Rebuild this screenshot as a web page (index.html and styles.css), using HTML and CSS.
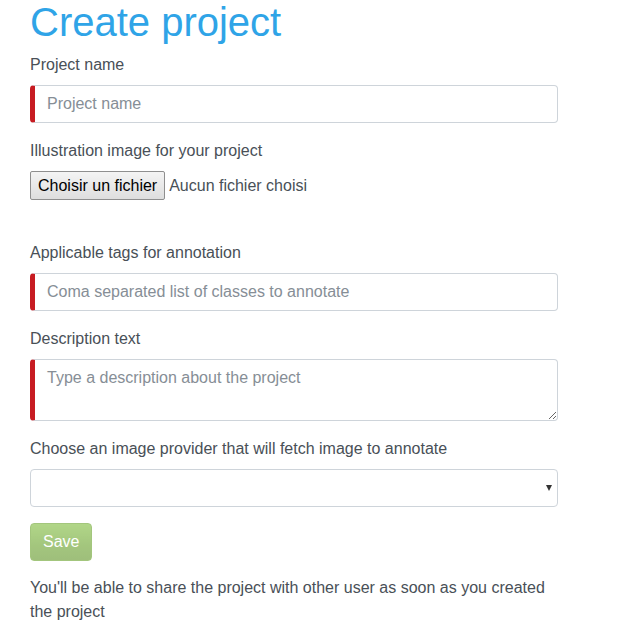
FILE: index.html
```html
<!DOCTYPE html>
<html>
<head>
<meta charset="utf-8">
<link rel="stylesheet" href="styles.css">
</head>
<body>
<div class="page">
  <h1 class="title">Create project</h1>
  <form class="form">
    <div class="group">
      <label class="label">Project name</label>
      <input class="control required" type="text" placeholder="Project name">
    </div>
    <div class="group group-file">
      <label class="label">Illustration image for your project</label>
      <div class="file">
        <button type="button" class="file-btn">Choisir un fichier</button>
        <span class="file-text">Aucun fichier choisi</span>
      </div>
    </div>
    <div class="group">
      <label class="label">Applicable tags for annotation</label>
      <input class="control required" type="text" placeholder="Coma separated list of classes to annotate">
    </div>
    <div class="group">
      <label class="label">Description text</label>
      <textarea class="control required area" rows="2" placeholder="Type a description about the project"></textarea>
    </div>
    <div class="group">
      <label class="label">Choose an image provider that will fetch image to annotate</label>
      <div class="select-wrap">
        <select class="control select"><option></option></select>
      </div>
    </div>
    <button type="button" class="save" disabled>Save</button>
    <p class="note">You'll be able to share the project with other user as soon as you created the project</p>
  </form>
</div>
</body>
</html>
```
FILE: styles.css
```css
html, body {
  margin: 0;
  padding: 0;
  background: #fff;
}
body {
  font-family: "Liberation Sans", Arial, sans-serif;
  font-size: 16px;
  line-height: 1.5;
  color: #495057;
}
.page {
  width: 528px;
  padding-left: 30px;
}
.title {
  font-size: 40px;
  font-weight: 400;
  line-height: 1.2;
  color: #2fa4e7;
  margin: -2px 0 7px;
}
.form {
  margin: 0;
}
.group {
  margin-bottom: 16px;
}
.group-file {
  margin-bottom: 41px;
}
.label {
  display: inline-block;
  margin-bottom: 8px;
}
.control {
  display: block;
  box-sizing: border-box;
  width: 100%;
  height: 38px;
  padding: 6px 12px;
  font-family: inherit;
  font-size: 16px;
  line-height: 1.5;
  color: #495057;
  background: #fff;
  border: 1px solid #ced4da;
  border-radius: 4px;
  margin: 0;
  outline: none;
}
.control::placeholder {
  color: #868e96;
  opacity: 1;
}
.required {
  border-left: 5px solid #c71c22;
}
.area {
  height: 62px;
  resize: vertical;
}
.file {
  display: flex;
  align-items: center;
  height: 29px;
}
.file-btn {
  box-sizing: border-box;
  height: 29px;
  padding: 0 7px;
  font-family: "Liberation Sans", Arial, sans-serif;
  font-size: 16px;
  color: #000;
  background: linear-gradient(#f4f4f4, #dedede);
  border: 1px solid #8f8f8f;
  border-radius: 2px;
  margin: 0 4px 0 0;
}
.file-text {
  font-size: 16px;
  color: #495057;
}
.select-wrap {
  position: relative;
}
.select {
  appearance: none;
  -webkit-appearance: none;
}
.select-wrap::after {
  content: "";
  position: absolute;
  right: 6px;
  top: 16px;
  border-left: 3px solid transparent;
  border-right: 3px solid transparent;
  border-top: 6px solid #333;
}
.save {
  display: block;
  box-sizing: border-box;
  height: 38px;
  padding: 6px 12px;
  font-family: inherit;
  font-size: 16px;
  line-height: 1.5;
  color: #fff;
  background: linear-gradient(#88c149, #73a839 60%, #6c9d36);
  border: 1px solid #73a839;
  border-radius: 4px;
  opacity: 0.65;
  margin: 0 0 15px;
}
.note {
  margin: 0;
}
```
